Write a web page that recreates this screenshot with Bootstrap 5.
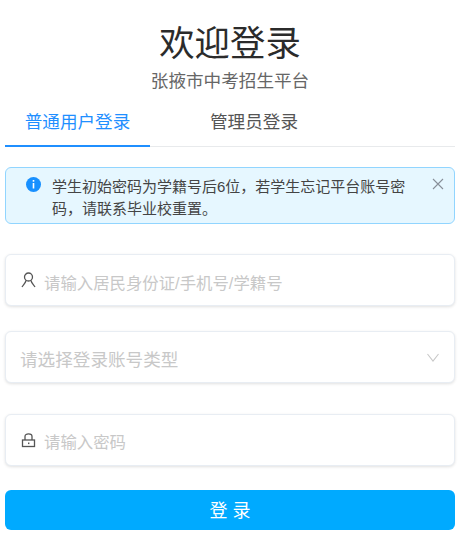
<!DOCTYPE html>
<html lang="zh-CN">
<head>
<meta charset="UTF-8">
<meta name="viewport" content="width=device-width, initial-scale=1.0">
<title>欢迎登录</title>
<link href="https://cdn.jsdelivr.net/npm/bootstrap@5.3.0/dist/css/bootstrap.min.css" rel="stylesheet">
<style>
body { font-family: "Liberation Sans", "Noto Sans CJK SC", sans-serif; background: #fff; }
.login-wrap { width: 450px; margin-left: 5px; }
.login-title { font-size: 35.4px; line-height: 50px; margin: 19px 0 0; color: #2b2b2b; font-weight: 400; }
.login-sub { font-size: 17.6px; line-height: 26px; color: #666; margin-top: -1px; }
.login-tabs { border-bottom: 1px solid #e8eaec; height: 47px; margin-top: 6px; }
.login-tab { height: 47px; line-height: 44px; font-size: 17.6px; text-align: center; text-decoration: none; }
.login-tab.on { width: 145px; color: #1f8fff; border-bottom: 2px solid #1f8fff; }
.login-tab.off { width: 178px; margin-left: 15px; color: #555; }
.login-alert { margin-top: 20px; height: 57px; background: #e6f7ff; border: 1px solid #91d5ff; border-radius: 6px; padding: 8px 46px 0 46px; font-size: 15px; line-height: 22px; color: #444; position: relative; }
.login-alert .tip-ico { position: absolute; left: 20px; top: 9px; }
.login-alert .tip-close { position: absolute; right: 10px; top: 10px; }
.login-field { height: 52px; background: #fff; border: 1px solid #e8edf3; border-radius: 6px; box-shadow: 0 1px 3px rgba(0,0,0,.12); padding: 0 15px; color: #c8c8c8; }
.f-input { font-size: 16.4px; margin-top: 30px; }
.f-input span { padding-top: 6px; }
.f-select { font-size: 17.6px; margin-top: 25px; padding-left: 14px; }
.f-select span { padding-top: 6px; }
.f-pass { margin-top: 31px; font-size: 16.4px; }
.f-pass span { padding-top: 4px; }
.login-btn { margin-top: 24px; width: 100%; height: 40px; background: #00aaff; border: 0; border-radius: 6px; color: #fff; font-size: 18px; padding: 2px 0 0; }
.login-btn:hover { background: #00aaff; color: #fff; }
</style>
</head>
<body>
<div class="login-wrap">
    <h1 class="login-title text-center">欢迎登录</h1>
    <div class="login-sub text-center">张掖市中考招生平台</div>

    <div class="login-tabs d-flex">
        <a href="#" class="login-tab on">普通用户登录</a>
        <a href="#" class="login-tab off">管理员登录</a>
    </div>

    <div class="login-alert">
        <svg class="tip-ico" width="15" height="15" viewBox="0 0 15 15"><circle cx="7.5" cy="7.5" r="7.5" fill="#1890ff"/><rect x="6.7" y="3" width="1.6" height="1.7" fill="#fff"/><rect x="6.7" y="6" width="1.6" height="5.5" fill="#fff"/></svg>
        学生初始密码为学籍号后6位，若学生忘记平台账号密码，请联系毕业校重置。
        <svg class="tip-close" width="12" height="12" viewBox="0 0 12 12"><path d="M1 1L11 11M11 1L1 11" stroke="#888f99" stroke-width="1.1" fill="none"/></svg>
    </div>

    <div class="login-field f-input d-flex align-items-center gap-2">
        <svg width="15" height="16" viewBox="0 0 15 16" fill="none" stroke="#555" stroke-width="1.3"><circle cx="7.5" cy="5" r="4"/><path d="M5 8.5C4.5 11 2.5 12.5 1 15M10 8.5C10.5 11 12.5 12.5 14 15"/></svg>
        <span class="login-ph">请输入居民身份证/手机号/学籍号</span>
    </div>

    <div class="login-field f-select d-flex align-items-center justify-content-between">
        <span>请选择登录账号类型</span>
        <svg class="me-0" width="12" height="9" viewBox="0 0 12 9" fill="none" stroke="#c8c8c8" stroke-width="1.1"><path d="M0.5 1L6 8L11.5 1"/></svg>
    </div>

    <div class="login-field f-pass d-flex align-items-center gap-2">
        <svg width="15" height="16" viewBox="0 0 15 16" fill="none" stroke="#555" stroke-width="1.3"><path d="M4 8V4.5C4 1 11 1 11 4.5V8"/><rect x="1.5" y="8" width="12" height="6.5"/><rect x="7" y="10.5" width="1.4" height="1.6" fill="#555" stroke="none"/></svg>
        <span class="login-ph">请输入密码</span>
    </div>

    <button type="button" class="btn login-btn">登 录</button>
</div>
<script src="https://cdn.jsdelivr.net/npm/bootstrap@5.3.0/dist/js/bootstrap.bundle.min.js"></script>
</body>
</html>
